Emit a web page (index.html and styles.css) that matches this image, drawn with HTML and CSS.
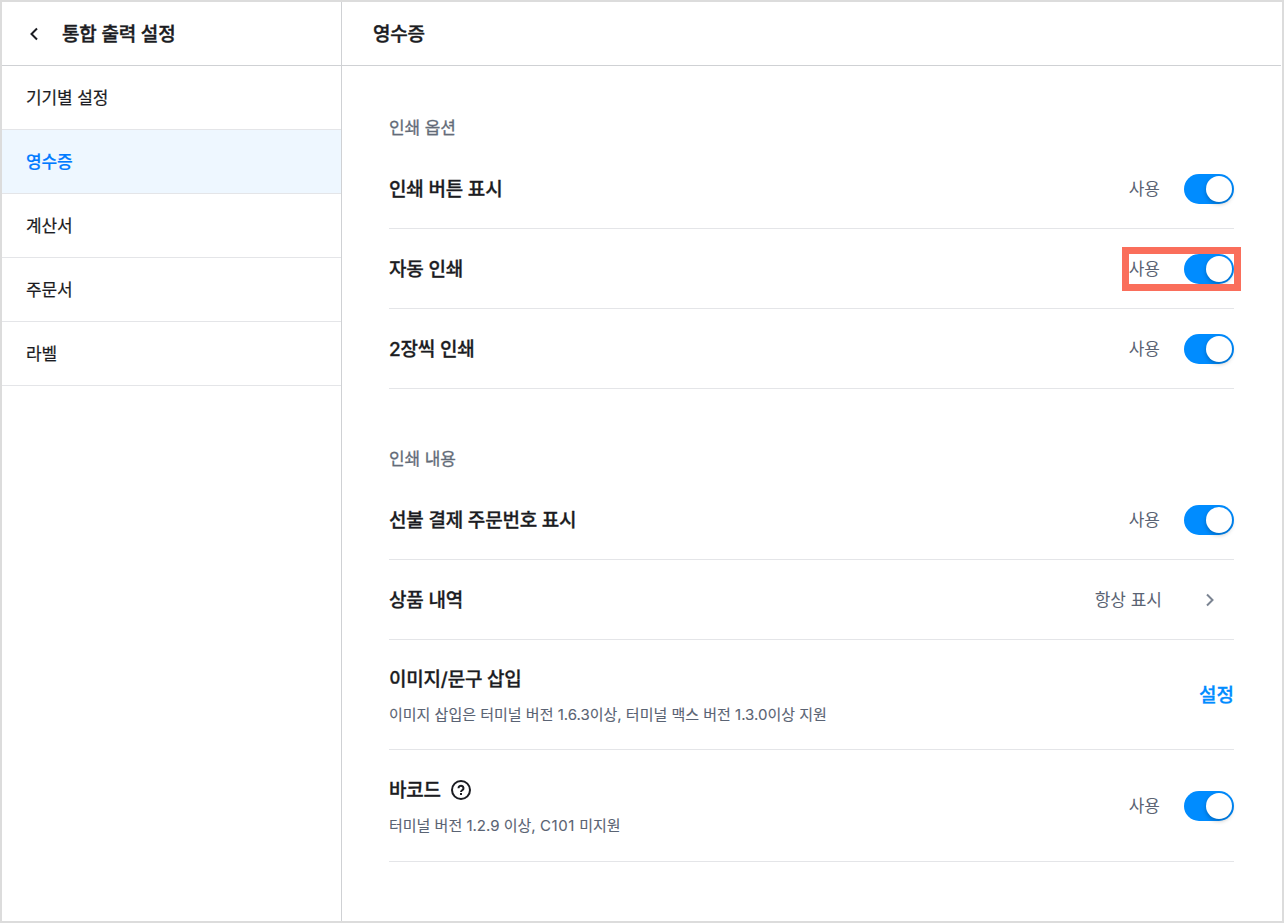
FILE: index.html
```
<!DOCTYPE html>
<html lang="ko">
    <head>
        <meta charset="utf-8">
        <title>통합 출력 설정</title>
        <link rel="stylesheet" href="styles.css">
    </head>
    <body>
        <div class="app">
            <div class="sidebar">
                <div class="header">
                    <svg class="back" width="24" height="24" viewBox="0 0 24 24"><path d="M15 6.500L9.500 12l5.500 5.500"/></svg>
                    <span>통합 출력 설정</span>
                </div>
                <div class="menu">기기별 설정</div>
                <div class="menu active">영수증</div>
                <div class="menu">계산서</div>
                <div class="menu">주문서</div>
                <div class="menu">라벨</div>
            </div>
            <div class="main">
                <div class="header"><span>영수증</span></div>
                <div class="content">
                    <div class="section">인쇄 옵션</div>
                    <div class="row">
                        <div class="name">인쇄 버튼 표시</div>
                        <div class="state">사용</div>
                        <div class="toggle"></div>
                    </div>
                    <div class="row">
                        <div class="name">자동 인쇄</div>
                        <div class="state">사용</div>
                        <div class="toggle"></div>
                        <div class="mark"></div>
                    </div>
                    <div class="row">
                        <div class="name">2장씩 인쇄</div>
                        <div class="state">사용</div>
                        <div class="toggle"></div>
                    </div>
                    <div class="section second">인쇄 내용</div>
                    <div class="row">
                        <div class="name">선불 결제 주문번호 표시</div>
                        <div class="state">사용</div>
                        <div class="toggle"></div>
                    </div>
                    <div class="row">
                        <div class="name">상품 내역</div>
                        <div class="state always">항상 표시</div>
                        <svg class="next" width="24" height="24" viewBox="0 0 24 24"><path d="M9 6.500l5.500 5.500L9 17.500"/></svg>
                    </div>
                    <div class="row insert">
                        <div class="name">이미지/문구 삽입
                            <div class="desc">이미지 삽입은 터미널 버전 1.6.3이상, 터미널 맥스 버전 1.3.0이상 지원</div>
                        </div>
                        <a class="link">설정</a>
                    </div>
                    <div class="row barcode">
                        <div class="name">
                            <div class="label">바코드
                                <svg class="help" width="24" height="24" viewBox="0 0 24 24"><circle cx="12" cy="12" r="9"/><path d="M9.500 10.200a2.500 2.300 0 1 1 4.100 1.700c-.9.700-1.600 1-1.600 2"/><path d="M12 15v2"/></svg>
                            </div>
                            <div class="desc">터미널 버전 1.2.9 이상, <span class="model">C101</span> 미지원</div>
                        </div>
                        <div class="state">사용</div>
                        <div class="toggle"></div>
                    </div>
                </div>
            </div>
        </div>
    </body>
</html>
```

FILE: styles.css
```
* {
  box-sizing: border-box;
}

body {
  margin: 0;
  font-family: Inter, "Noto Sans CJK KR", sans-serif;
  color: #1b1c22;
  background-color: white;
}

.app {
  display: flex;
  width: 1284px;
  height: 923px;
  border: 2px solid #dcdcdc;
}

.sidebar {
  width: 340px;
  border-right: 1px solid #cfd1d4;
}

.main {
  flex: 1;
}

.header {
  display: flex;
  align-items: center;
  height: 64px;
  border-bottom: 1px solid #cfd1d4;
  font-size: 19px;
  font-weight: 500;
  letter-spacing: -0.2px;
  -webkit-text-stroke: 0.4px;
  white-space: nowrap;
}

.header span {
  padding-bottom: 2px;
}

.main .header {
  margin-right: 1px;
  padding-left: 31px;
}

.sidebar .header {
  padding-left: 20px;
  gap: 16px;
}

svg {
  fill: none;
  stroke: #1b1c22;
  stroke-width: 2;
}

.menu {
  display: flex;
  align-items: center;
  height: 64px;
  padding-left: 24px;
  border-bottom: 1px solid #e4e5e8;
  font-size: 17px;
  line-height: 24px;
  font-weight: 400;
  letter-spacing: -0.1px;
  -webkit-text-stroke: 0.2px;
}

.active {
  background-color: #eef7ff;
  color: #007bff;
  font-weight: 500;
}

.content {
  padding: 51px 48px 0 47px;
}

.section {
  height: 23px;
  line-height: 23px;
  margin-bottom: 9px;
  font-size: 17px;
  font-weight: 400;
  letter-spacing: -0.1px;
  -webkit-text-stroke: 0.3px;
  color: #636b78;
}

.second {
  margin-top: 59px;
}

.row {
  position: relative;
  display: flex;
  align-items: center;
  height: 80px;
  border-bottom: 1px solid #e4e5e8;
}

.name {
  flex: 1;
  padding-top: 2px;
  font-size: 19px;
  line-height: 28px;
  font-weight: 500;
  letter-spacing: -0.2px;
  -webkit-text-stroke: 0.3px;
}

.state {
  margin-right: 24px;
  padding-bottom: 2px;
  font-size: 17px;
  color: #5a6373;
}

.toggle {
  width: 50px;
  height: 30px;
  padding: 2px;
  border-radius: 15px;
  background-color: #008cff;
}

.toggle::after {
  content: "";
  display: block;
  width: 26px;
  height: 26px;
  margin-left: 20px;
  border-radius: 50%;
  background-color: white;
  box-shadow: 0 2px 4px rgba(0, 0, 0, 0.25);
}

.mark {
  position: absolute;
  right: -7px;
  top: 18px;
  width: 119px;
  height: 44px;
  border: 7px solid #fa6e5b;
}

.always {
  margin-right: 36px;
}

.next {
  margin-right: 12px;
  stroke: #7b8492;
}

.insert {
  height: 110px;
}

.barcode {
  height: 112px;
}

.insert .name,
.barcode .name {
  padding-top: 5px;
}

.desc {
  margin-top: 7px;
  font-size: 15px;
  font-weight: 400;
  letter-spacing: 0;
  -webkit-text-stroke: 0.1px;
  color: #5a6373;
}

.model {
  letter-spacing: 0.6px;
}

.label {
  display: flex;
  align-items: center;
  gap: 8px;
}

.help {
  margin-bottom: 2px;
}

.link {
  padding-bottom: 2px;
  font-size: 19px;
  font-weight: 500;
  -webkit-text-stroke: 0.3px;
  color: #008cff;
}
```
